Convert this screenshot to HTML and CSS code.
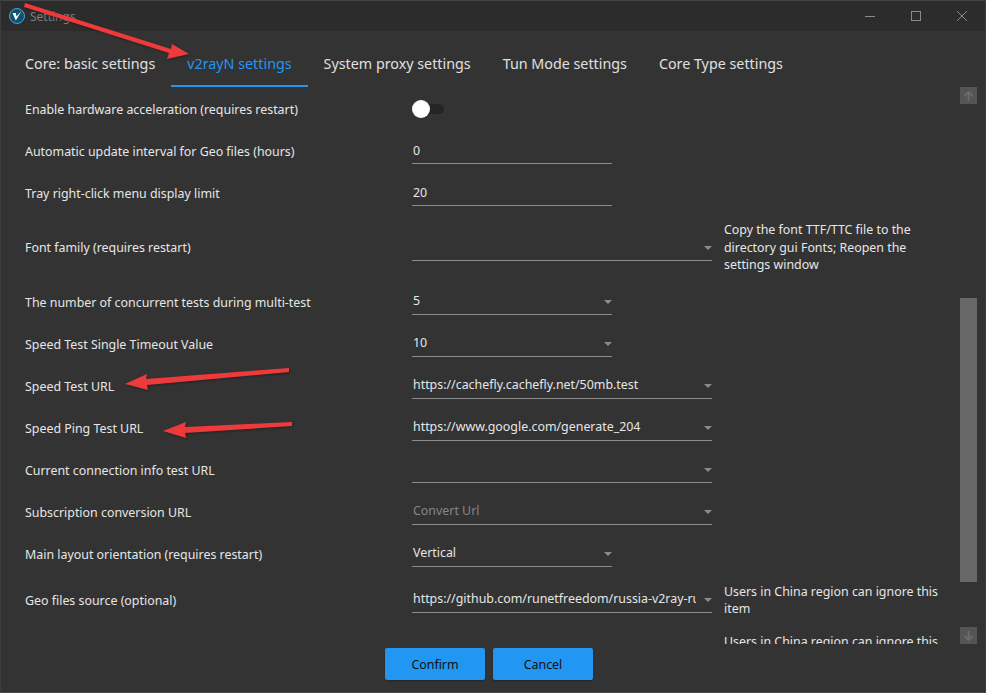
FILE: index.html
```html
<!DOCTYPE html>
<html>
	<head>
		<meta charset="utf-8" />
		<title>Settings</title>
		<link rel="stylesheet" href="styles.css">
	</head>
	<body>
	<div class="window">
		<div class="titlebar">
			<svg class="logo" width="16" height="16" viewBox="0 0 16 16">
				<circle cx="8" cy="8" r="7.5" fill="#14506f" stroke="#4aa3d0"/>
				<path d="M3.5 5 L6.8 12.5 L12.5 3 L7.5 8.5 L6.8 5 Z" fill="#fff"/>
			</svg>
			<span class="window-title">Settings</span>
			<div class="window-btns">
				<svg width="10" height="10" viewBox="0 0 10 10"><path d="M0 5.5H10" stroke="#8a8a8a" fill="none"/></svg>
				<svg width="10" height="10" viewBox="0 0 10 10"><rect x="0.5" y="0.5" width="9" height="9" stroke="#8a8a8a" fill="none"/></svg>
				<svg width="10" height="10" viewBox="0 0 10 10"><path d="M0 0L10 10M10 0L0 10" stroke="#8a8a8a" fill="none"/></svg>
			</div>
		</div>

		<div class="tabs">
			<div class="tab">Core: basic settings</div>
			<div class="tab active">v2rayN settings</div>
			<div class="tab">System proxy settings</div>
			<div class="tab">Tun Mode settings</div>
			<div class="tab">Core Type settings</div>
		</div>

		<div class="body">
			<div class="list">
				<div class="row">
					<label>Enable hardware acceleration (requires restart)</label>
					<div class="switch"><span class="track"></span><span class="knob"></span></div>
				</div>
				<div class="row">
					<label>Automatic update interval for Geo files (hours)</label>
					<div class="field small plain">0</div>
				</div>
				<div class="row">
					<label>Tray right-click menu display limit</label>
					<div class="field small plain">20</div>
				</div>
				<div class="row tall">
					<label>Font family (requires restart)</label>
					<div class="field"><span class="val"></span><i class="caret"></i></div>
					<p class="help">Copy the font TTF/TTC file to the directory gui Fonts; Reopen the settings window</p>
				</div>
				<div class="row">
					<label>The number of concurrent tests during multi-test</label>
					<div class="field small"><span class="val">5</span><i class="caret"></i></div>
				</div>
				<div class="row">
					<label>Speed Test Single Timeout Value</label>
					<div class="field small"><span class="val">10</span><i class="caret"></i></div>
				</div>
				<div class="row">
					<label>Speed Test URL</label>
					<div class="field"><span class="val">https://cachefly.cachefly.net/50mb.test</span><i class="caret"></i></div>
				</div>
				<div class="row">
					<label>Speed Ping Test URL</label>
					<div class="field"><span class="val">https://www.google.com/generate_204</span><i class="caret"></i></div>
				</div>
				<div class="row">
					<label>Current connection info test URL</label>
					<div class="field"><span class="val"></span><i class="caret"></i></div>
				</div>
				<div class="row">
					<label>Subscription conversion URL</label>
					<div class="field"><span class="val hint">Convert Url</span><i class="caret"></i></div>
				</div>
				<div class="row">
					<label>Main layout orientation (requires restart)</label>
					<div class="field small"><span class="val">Vertical</span><i class="caret"></i></div>
				</div>
				<div class="row mid">
					<label>Geo files source (optional)</label>
					<div class="field"><span class="val">https://github.com/runetfreedom/russia-v2ray-rules-dat</span><i class="caret"></i></div>
					<p class="help">Users in China region can ignore this item</p>
				</div>
				<div class="row mid">
					<label></label>
					<div></div>
					<p class="help">Users in China region can ignore this item</p>
				</div>
			</div>
			<div class="scrollbar">
				<div class="sb-btn"><svg width="9" height="10" viewBox="0 0 9 10"><path d="M4.5 10V1M0.5 5L4.5 1L8.5 5" stroke="#6e6e6e" stroke-width="1.6" fill="none"/></svg></div>
				<div class="sb-track"><div class="sb-thumb"></div></div>
				<div class="sb-btn"><svg width="9" height="10" viewBox="0 0 9 10"><path d="M4.5 0V9M0.5 5L4.5 9L8.5 5" stroke="#6e6e6e" stroke-width="1.6" fill="none"/></svg></div>
			</div>
		</div>

		<div class="footer">
			<button class="btn">Confirm</button>
			<button class="btn">Cancel</button>
		</div>
	</div>

	<!-- red arrows drawn over the screenshot -->
	<svg class="arrows" width="986" height="693" viewBox="0 0 986 693">
		<polygon points="25,3 171,49 172,44 189,54 167,59 169,53 24,7" fill="#ee3a3a"/>
		<polygon points="289,368 146,379 147,374 125,384 148,390 147,385 289,372" fill="#ee3a3a"/>
		<polygon points="292,422 185,427 186,422 163,431 186,438 185,433 292,426" fill="#ee3a3a"/>
	</svg>
	</body>
</html>
```

FILE: styles.css
```css
*{margin: 0;padding: 0;box-sizing: border-box;}
html,body{height: 100%;overflow: hidden;}
body{background: #4a4a4a;font-family: "Noto Sans","Open Sans",sans-serif;font-size: 12.4px;color: #e6e6e6;position: relative;}

.window{height: 692px;background: #333;border-left: 1px solid #3c3c3c;border-right: 1px solid #3c3c3c;display: flex;flex-direction: column;}

.titlebar{height: 31px;background: #2c2c2c;border-top: 1px solid #444;display: flex;align-items: center;padding-left: 8px;flex: none;}
.logo{flex: none;}
.window-title{margin-left: 5px;color: #7d7d7d;font-size: 12px;}
.window-btns{margin-left: auto;display: flex;gap: 36px;padding-right: 18px;}

.tabs{height: 57px;display: flex;align-items: center;padding-left: 8px;flex: none;}
.tab{height: 57px;line-height: 65px;padding: 0 16px;font-size: 14.3px;color: #e0e0e0;}
.tab.active{color: #2196f3;border-bottom: 2px solid #2196f3;height: 56px;margin-bottom: 1px;}

.body{flex: 1;display: flex;min-height: 0;}
.list{width: 959px;height: 556px;overflow: hidden;padding-left: 24px;}
.row{display: grid;grid-template-columns: 387px 312px 216px;height: 42px;align-items: center;}
.row.tall{height: 67px;}
.row.mid{height: 50px;}
.help{line-height: 17.5px;}

.field{width: 300px;height: 26px;border-bottom: 1px solid #8c8c8c;display: flex;align-items: center;position: relative;}
.field.small{width: 200px;}
.field.plain{padding-left: 1px;padding-bottom: 1px;}
.val{flex: 1;padding-left: 1px;white-space: nowrap;overflow: hidden;padding-bottom: 2px;margin-right: 16px;}
.hint{color: #858585;}
.caret{width: 0;height: 0;border-left: 4px solid transparent;border-right: 4px solid transparent;border-top: 4px solid #8c8c8c;position: absolute;right: 0;top: 11px;}

.switch{width: 32px;height: 18px;position: relative;}
.track{position: absolute;left: 10px;top: 4px;width: 22px;height: 10px;background: #242424;border-radius: 5px;}
.knob{position: absolute;left: 0;top: 0;width: 18px;height: 18px;border-radius: 50%;background: #fff;}

.scrollbar{width: 17px;height: 557px;margin-top: -1px;display: flex;flex-direction: column;flex: none;}
.sb-btn{height: 17px;background: #555;display: flex;align-items: center;justify-content: center;flex: none;}
.sb-track{flex: 1;padding-top: 194px;padding-bottom: 45px;}
.sb-thumb{height: 100%;background: #686868;}

.footer{height: 48px;flex: none;display: flex;gap: 8px;padding-left: 384px;padding-top: 4px;}
.btn{width: 100px;height: 32px;padding-top: 1px;background: #2196f3;color: #111;border: none;border-radius: 2px;font-family: inherit;font-size: 12.4px;box-shadow: 0 1px 2px rgba(0,0,0,0.3);}

.arrows{position: absolute;left: 0;top: 0;pointer-events: none;filter: drop-shadow(1px 1px 1px rgba(0,0,0,0.35));}
```
